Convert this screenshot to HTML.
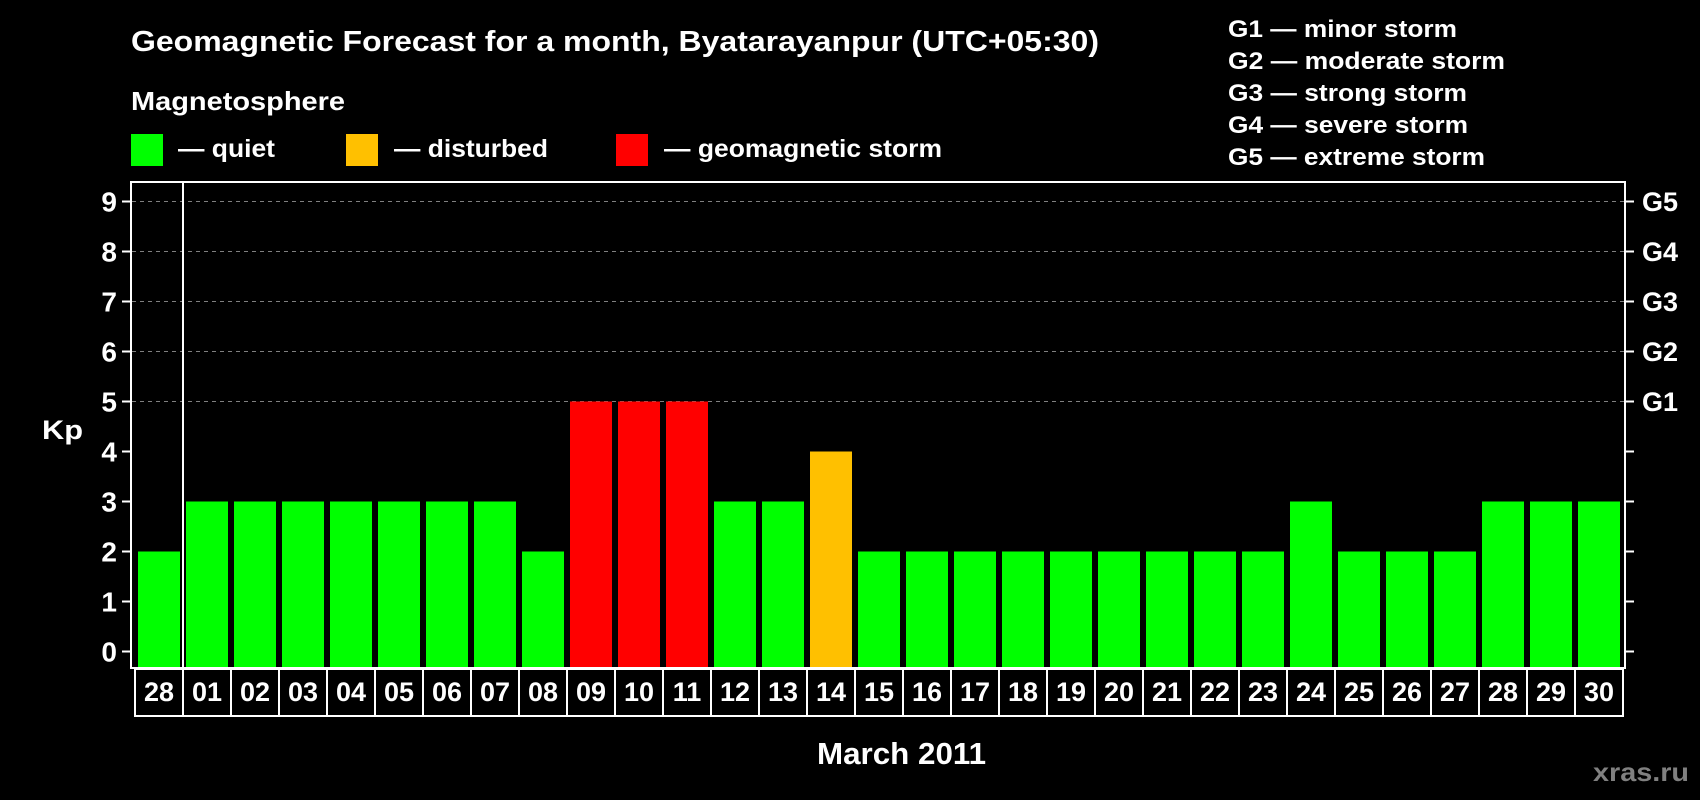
<!DOCTYPE html>
<html><head><meta charset="utf-8"><style>
html,body{margin:0;padding:0;background:#000;width:1700px;height:800px;overflow:hidden}
svg{display:block}
text{font-family:"Liberation Sans",Arial,sans-serif;font-weight:bold;fill:#fff}
</style></head><body>
<svg width="1700" height="800" viewBox="0 0 1700 800" xmlns="http://www.w3.org/2000/svg">
<rect width="1700" height="800" fill="#000"/>
<text x="131" y="51" font-size="29" textLength="968" lengthAdjust="spacingAndGlyphs">Geomagnetic Forecast for a month, Byatarayanpur (UTC+05:30)</text>
<text x="131" y="110" font-size="26" textLength="214" lengthAdjust="spacingAndGlyphs">Magnetosphere</text>
<rect x="131" y="134" width="32" height="32" fill="#00ff00"/>
<rect x="346" y="134" width="32" height="32" fill="#ffc000"/>
<rect x="616" y="134" width="32" height="32" fill="#ff0000"/>
<text x="178" y="157" font-size="25" textLength="97" lengthAdjust="spacingAndGlyphs">— quiet</text>
<text x="394" y="157" font-size="25" textLength="154" lengthAdjust="spacingAndGlyphs">— disturbed</text>
<text x="664" y="157" font-size="25" textLength="278" lengthAdjust="spacingAndGlyphs">— geomagnetic storm</text>
<g font-size="24">
<text x="1228" y="37" textLength="229" lengthAdjust="spacingAndGlyphs">G1 — minor storm</text>
<text x="1228" y="69" textLength="277" lengthAdjust="spacingAndGlyphs">G2 — moderate storm</text>
<text x="1228" y="101" textLength="239" lengthAdjust="spacingAndGlyphs">G3 — strong storm</text>
<text x="1228" y="133" textLength="240" lengthAdjust="spacingAndGlyphs">G4 — severe storm</text>
<text x="1228" y="165" textLength="257" lengthAdjust="spacingAndGlyphs">G5 — extreme storm</text>
</g>
<text x="42" y="439" font-size="27" textLength="41" lengthAdjust="spacingAndGlyphs">Kp</text>
<g stroke="#808080" stroke-width="1" stroke-dasharray="4,4">
<line x1="132" y1="401.5" x2="1624" y2="401.5"/>
<line x1="132" y1="351.5" x2="1624" y2="351.5"/>
<line x1="132" y1="301.5" x2="1624" y2="301.5"/>
<line x1="132" y1="251.5" x2="1624" y2="251.5"/>
<line x1="132" y1="201.5" x2="1624" y2="201.5"/>
</g>
<g id="bars"></g>
<rect x="131" y="182" width="1494" height="486" fill="none" stroke="#fff" stroke-width="2"/>
<line x1="183" y1="182" x2="183" y2="668" stroke="#fff" stroke-width="2"/>
<g id="ticks" stroke="#fff" stroke-width="2"></g>
<g id="ylab" font-size="28" text-anchor="end"></g>
<g font-size="27">
<text x="1642" y="211">G5</text>
<text x="1642" y="261">G4</text>
<text x="1642" y="311">G3</text>
<text x="1642" y="361">G2</text>
<text x="1642" y="411">G1</text>
</g>
<rect x="135" y="669" width="1488" height="47" fill="none" stroke="#fff" stroke-width="2"/>
<g id="dates" font-size="27" text-anchor="middle"></g>
<text x="817" y="764" font-size="31" textLength="169" lengthAdjust="spacingAndGlyphs">March 2011</text>
<text x="1593" y="781" font-size="26" style="fill:#808080" textLength="96" lengthAdjust="spacingAndGlyphs">xras.ru</text>
</svg>
<script>
(function(){
var ns="http://www.w3.org/2000/svg";
var vals=[2,3,3,3,3,3,3,3,2,5,5,5,3,3,4,2,2,2,2,2,2,2,2,2,3,2,2,2,3,3,3];
var labs=["28","01","02","03","04","05","06","07","08","09","10","11","12","13","14","15","16","17","18","19","20","21","22","23","24","25","26","27","28","29","30"];
var bars=document.getElementById("bars"),dates=document.getElementById("dates"),ticks=document.getElementById("ticks"),ylab=document.getElementById("ylab");
function el(t,a,p){var e=document.createElementNS(ns,t);for(var k in a)e.setAttribute(k,a[k]);p.appendChild(e);return e;}
for(var i=0;i<31;i++){
 var v=vals[i],c=v>=5?"#ff0000":(v==4?"#ffc000":"#00ff00");
 var by=651.5-50*v;
 el("rect",{x:138+48*i,y:by,width:42,height:668-by,fill:c},bars);
 if(i>0) el("line",{x1:135+48*i,y1:669,x2:135+48*i,y2:716},ticks);
 var t=el("text",{x:159+48*i,y:701},dates);t.textContent=labs[i];
}
for(var k=0;k<=9;k++){
 var y=651.5-50*k;
 el("line",{x1:122,y1:y,x2:131,y2:y},ticks);
 el("line",{x1:1625,y1:y,x2:1634,y2:y},ticks);
 var t2=el("text",{x:117,y:y+10},ylab);t2.textContent=k;
}
})();
</script>
</body></html>
